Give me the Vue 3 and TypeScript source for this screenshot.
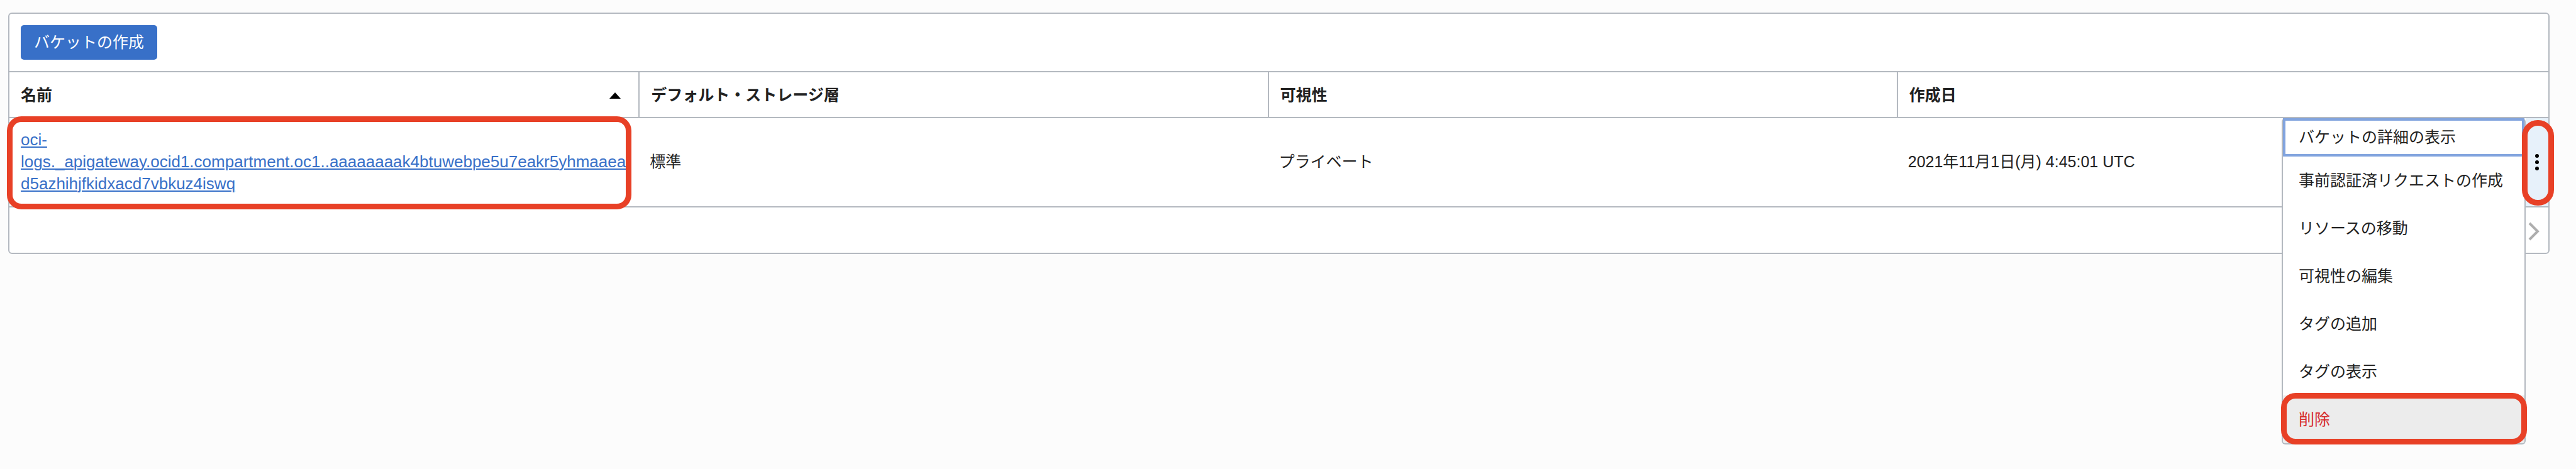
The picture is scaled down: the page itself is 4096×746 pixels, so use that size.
<script setup lang="ts">
interface MenuItem {
  label: string
  kind?: 'focused' | 'danger'
}

const columns: string[] = ['名前', 'デフォルト・ストレージ層', '可視性', '作成日']

const bucketNameLines: string[] = [
  'oci-',
  'logs._apigateway.ocid1.compartment.oc1..aaaaaaaak4btuwebpe5u7eakr5yhmaaea',
  'd5azhihjfkidxacd7vbkuz4iswq',
]

const menuItems: MenuItem[] = [
  { label: 'バケットの詳細の表示', kind: 'focused' },
  { label: '事前認証済リクエストの作成' },
  { label: 'リソースの移動' },
  { label: '可視性の編集' },
  { label: 'タグの追加' },
  { label: 'タグの表示' },
  { label: '削除', kind: 'danger' },
]
</script>

<template>
  <main class="page">
    <section class="panel">
      <div class="toolbar">
        <button type="button" class="create">バケットの作成</button>
      </div>
      <table class="buckets">
        <colgroup>
          <col v-for="c in columns" :key="c" />
          <col class="action-col" />
        </colgroup>
        <thead>
          <tr>
            <th v-for="(c, i) in columns" :key="c" scope="col">
              <div class="head">
                <span>{{ c }}</span>
                <svg v-if="i === 0" class="sort" viewBox="0 0 18 10" aria-hidden="true">
                  <path d="M9 0 18 10H0Z" fill="#000" />
                </svg>
              </div>
            </th>
            <td></td>
          </tr>
        </thead>
        <tbody>
          <tr>
            <td class="name-cell">
              <a href="#" class="name"
                ><template v-for="(line, i) in bucketNameLines" :key="line"
                  ><br v-if="i > 0" />{{ line }}</template
                ></a
              >
              <span class="mark name-mark"></span>
            </td>
            <td>標準</td>
            <td>プライベート</td>
            <td>2021年11月1日(月) 4:45:01 UTC</td>
            <td class="action-cell">
              <button type="button" class="kebab" aria-label="アクション" aria-expanded="true">
                <svg viewBox="0 0 6 26" aria-hidden="true">
                  <circle cx="3" cy="3" r="3" />
                  <circle cx="3" cy="13" r="3" />
                  <circle cx="3" cy="23" r="3" />
                </svg>
              </button>
              <div class="menu" role="menu">
                <button
                  v-for="item in menuItems"
                  :key="item.label"
                  type="button"
                  role="menuitem"
                  class="item"
                  :class="item.kind"
                >
                  {{ item.label }}
                  <span v-if="item.kind === 'danger'" class="mark delete-mark"></span>
                </button>
              </div>
              <span class="mark kebab-mark"></span>
            </td>
          </tr>
        </tbody>
      </table>
      <div class="pager">
        <button type="button" class="next" aria-label="次のページ">
          <svg viewBox="0 0 18 30" aria-hidden="true">
            <path d="M2 2 15 15 2 28" fill="none" stroke="#aeaeae" stroke-width="4" />
          </svg>
        </button>
      </div>
    </section>
  </main>
</template>

<style>
body {
  margin: 0;
  background: #fcfcfc;
}
</style>

<style scoped>
.page {
  box-sizing: border-box;
  min-height: 100vh;
  padding: 20px 42px 0 13px;
  font-family: 'Liberation Sans', 'Noto Sans CJK JP', sans-serif;
  font-size: 25px;
  line-height: 35px;
  color: #222;
  background: #fcfcfc;
}

button {
  font: inherit;
  color: inherit;
  border: 0;
  margin: 0;
  cursor: pointer;
}

.panel {
  background: #fff;
  border: 2px solid #b4b9c0;
  border-radius: 6px;
}

.toolbar {
  padding: 18px;
  border-bottom: 2px solid #b4b9c0;
}

.create {
  display: block;
  padding: 10px 21px;
  color: #fff;
  background: #3870c8;
  border-radius: 5px;
}

.buckets {
  width: 100%;
  table-layout: fixed;
  border-collapse: separate;
  border-spacing: 0;
}

.action-col {
  width: 36px;
}

th,
td {
  box-sizing: border-box;
  padding: 17px 18px 18px;
  text-align: left;
  vertical-align: middle;
  border-bottom: 2px solid #b4b9c0;
}

th {
  padding: 19px 18px 17px;
}

th + th {
  border-left: 2px solid #b4b9c0;
}

td:last-child {
  padding: 0;
}

.head {
  display: flex;
  align-items: center;
  justify-content: space-between;
}

.sort {
  width: 18px;
  height: 10px;
  margin-right: 10px;
}

.name-cell,
.action-cell {
  position: relative;
}

.name {
  font-size: 26px;
  color: #3870c8;
  text-decoration: underline;
  text-decoration-thickness: 2px;
  text-underline-offset: 2px;
  white-space: nowrap;
}

.action-cell {
  background: #e7f1fa;
}

.kebab {
  display: flex;
  align-items: center;
  justify-content: center;
  width: 100%;
  height: 140px;
  padding: 0;
  background: none;
}

.kebab svg {
  width: 6px;
  height: 26px;
}

.menu {
  position: absolute;
  top: 0;
  right: 100%;
  display: flex;
  flex-direction: column;
  box-sizing: border-box;
  width: 388px;
  background: #fff;
  border: 2px solid #b4b9c0;
  border-top: 0;
  border-radius: 6px;
}

.item {
  position: relative;
  height: 76px;
  padding: 0 25px;
  text-align: left;
  white-space: nowrap;
  background: none;
}

.item.focused {
  height: 61px;
  padding: 0 21px;
  border: 4px solid #82a4de;
}

.item.danger {
  color: #d62b2b;
  background: #ececec;
  border-radius: 0 0 4px 4px;
}

.mark {
  position: absolute;
  border: 9px solid #e84026;
  border-radius: 23px;
  pointer-events: none;
}

.name-mark {
  inset: -3px 11px -5px -4px;
}

.kebab-mark {
  inset: 3px -9px 1px -6px;
  border-radius: 25px;
}

.delete-mark {
  inset: -4px -4px -2px -3px;
}

.pager {
  display: flex;
  justify-content: flex-end;
  padding: 23px 14px 19px;
}

.next {
  display: block;
  padding: 0;
  background: none;
}

.next svg {
  display: block;
  width: 18px;
  height: 30px;
}
</style>
